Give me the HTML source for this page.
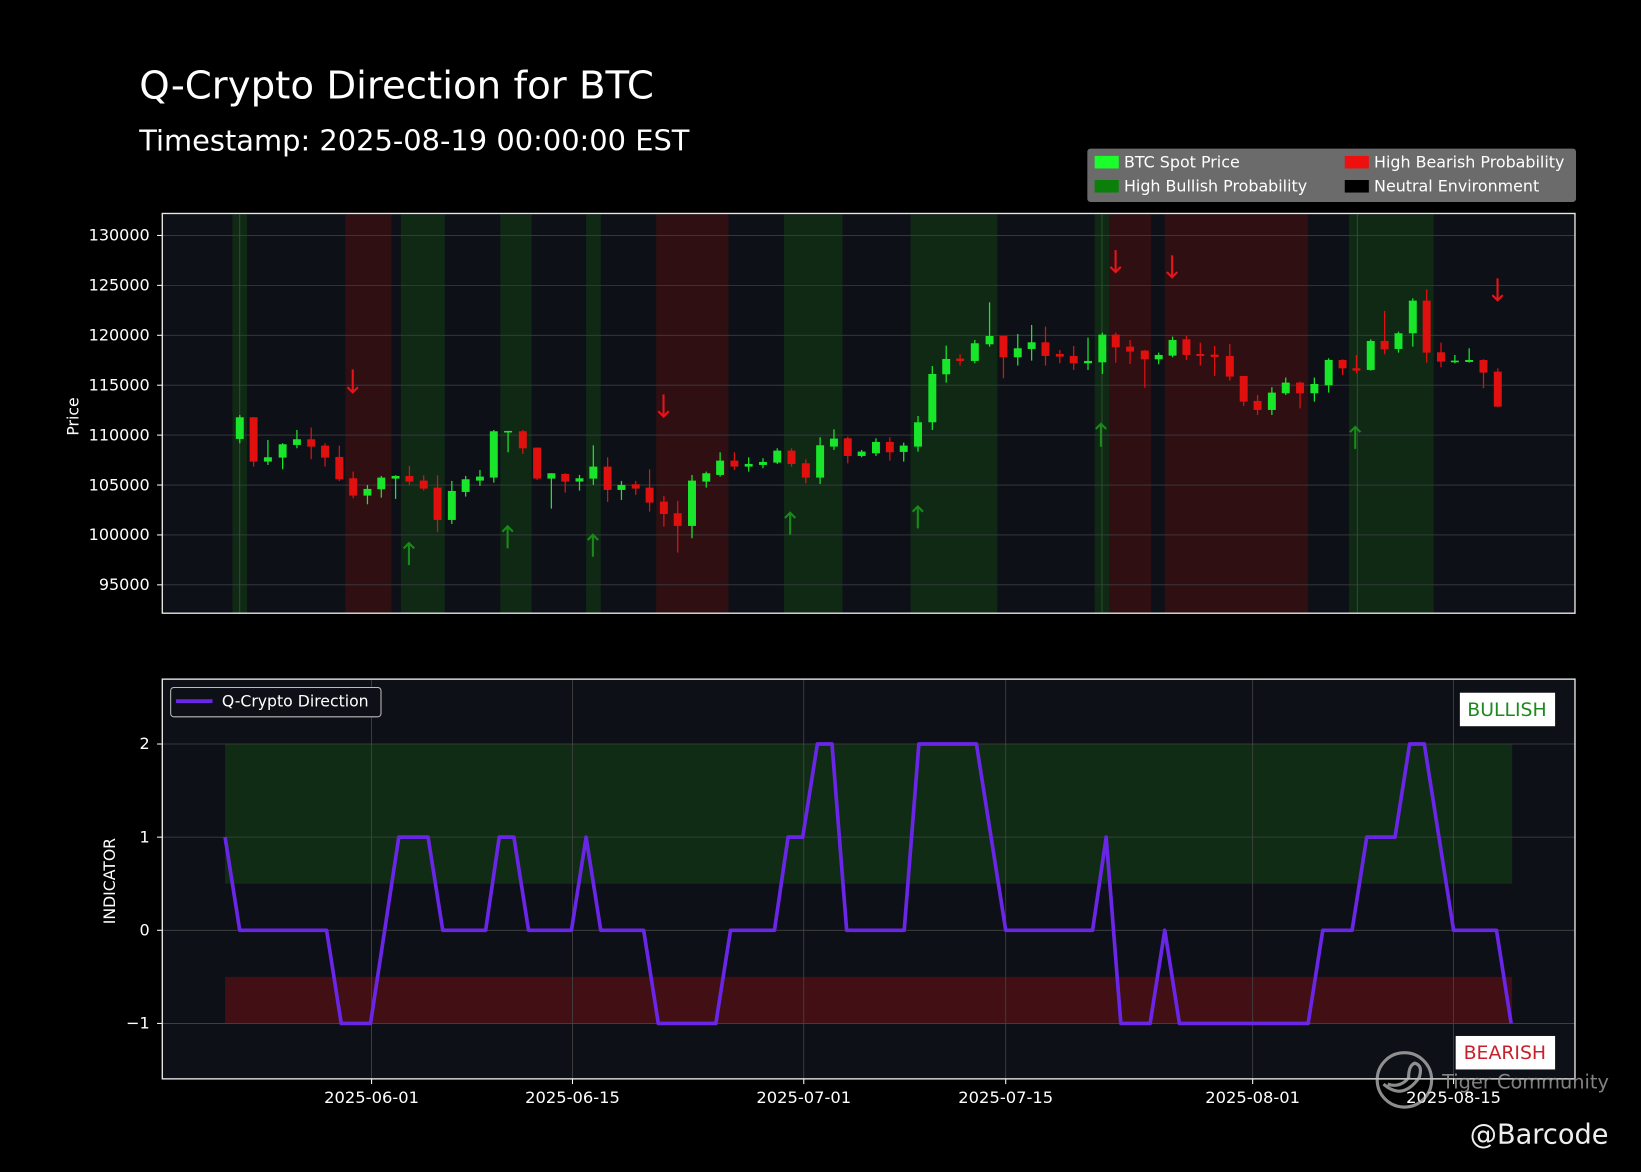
<!DOCTYPE html>
<html><head><meta charset="utf-8">
<style>
html,body{margin:0;padding:0;background:#000;width:1641px;height:1172px;overflow:hidden}
svg{display:block}
text{font-family:"DejaVu Sans","Liberation Sans",sans-serif}
</style></head><body>
<svg id="s" width="1641" height="1172" viewBox="0 0 1568 1120" xmlns="http://www.w3.org/2000/svg">
<rect width="1568" height="1120" fill="#000"/>
<text x="133" y="94" fill="#fff" font-size="37">Q-Crypto Direction for BTC</text>
<text x="133" y="144" fill="#fff" font-size="27.6">Timestamp: 2025-08-19 00:00:00 EST</text>
<!-- legend -->
<rect x="1039" y="142" width="467" height="51" rx="3" fill="#6b6b6b"/>
<rect x="1046" y="149" width="23" height="12" fill="#1aff2a"/>
<text x="1074" y="160" fill="#fff" font-size="15.2">BTC Spot Price</text>
<rect x="1046" y="172" width="23" height="12" fill="#0a800a"/>
<text x="1074" y="183" fill="#fff" font-size="15.2">High Bullish Probability</text>
<rect x="1285" y="149" width="23" height="12" fill="#ee0f0f"/>
<text x="1313" y="160" fill="#fff" font-size="15.2">High Bearish Probability</text>
<rect x="1285" y="172" width="23" height="12" fill="#000"/>
<text x="1313" y="183" fill="#fff" font-size="15.2">Neutral Environment</text>
<!-- top plot -->
<rect x="155" y="204" width="1350" height="382" fill="#0d1016"/>
<g id="top"></g>
<rect x="155" y="204" width="1350" height="382" fill="none" stroke="#e8e8e8" stroke-width="1.3"/>
<text x="75" y="398" fill="#fff" font-size="15" text-anchor="middle" transform="rotate(-90 75 398)">Price</text>
<g id="ytop" fill="#fff" font-size="15.3" text-anchor="end"></g>
<!-- bottom plot -->
<rect x="155" y="649" width="1350" height="382" fill="#0d1016"/>
<g id="bot"></g>
<rect x="155" y="649" width="1350" height="382" fill="none" stroke="#e8e8e8" stroke-width="1.3"/>
<text x="110" y="842" fill="#fff" font-size="15" text-anchor="middle" transform="rotate(-90 110 842)">INDICATOR</text>
<g fill="#fff" font-size="15.3" text-anchor="end">
<text x="143" y="716">2</text><text x="143" y="805">1</text><text x="143" y="894">0</text><text x="143" y="983">−1</text>
</g>
<g fill="#fff" font-size="15.6" text-anchor="middle">
<text x="355" y="1054">2025-06-01</text><text x="547" y="1054">2025-06-15</text><text x="768" y="1054">2025-07-01</text>
<text x="961" y="1054">2025-07-15</text><text x="1197" y="1054">2025-08-01</text><text x="1389" y="1054">2025-08-15</text>
</g>
<rect x="163" y="657" width="201" height="28" rx="3" fill="#0d1016" stroke="#bbb" stroke-width="1"/>
<line x1="168" y1="670" x2="203" y2="670" stroke="#6a26e6" stroke-width="3.5"/>
<text x="212" y="675" fill="#fff" font-size="15">Q-Crypto Direction</text>
<rect x="1395" y="662" width="91" height="32" fill="#fff"/>
<text x="1440" y="684" fill="#1e8a1e" font-size="18" text-anchor="middle">BULLISH</text>
<rect x="1391" y="990" width="95" height="32" fill="#fff"/>
<text x="1438" y="1012" fill="#c8202a" font-size="18" text-anchor="middle">BEARISH</text>
<!-- watermark -->
<g opacity="0.75" stroke="#bbb" fill="none" stroke-width="3">
<circle cx="1342" cy="1032" r="26"/>
<path d="M1322 1036 Q1340 1052 1356 1030 Q1360 1018 1352 1016 Q1346 1018 1346 1030 Q1338 1040 1326 1036"/>
</g>
<text x="1378" y="1040" fill="#999" font-size="18.5" opacity="0.85">Tiger Community</text>
<text x="1537" y="1093" fill="#eee" font-size="26" text-anchor="end">@Barcode</text>
</svg>
<script>
var NS="http://www.w3.org/2000/svg";
function el(p,t,a){var e=document.createElementNS(NS,t);for(var k in a)e.setAttribute(k,a[k]);p.appendChild(e);return e;}
var top_=document.getElementById('top'),bot=document.getElementById('bot'),yt=document.getElementById('ytop');
var G="rgba(20,90,20,0.35)",R="rgba(90,15,15,0.45)";
[[222,236,G],[330,374,R],[383,425,G],[478,508,G],[560,574,G],[627,696,R],[749,805,G],[870,953,G],[1046,1060,G],[1060,1100,R],[1113,1250,R],[1289,1370,G]].forEach(function(r){el(top_,'rect',{x:r[0],y:205,width:r[1]-r[0],height:381,fill:r[2]});});
for(var i=0;i<8;i++){var p=130000-i*5000,y=225+i*47.7;el(top_,'line',{x1:155,x2:1505,y1:y,y2:y,stroke:'#3a3d42','stroke-width':0.8});
el(top_,'line',{x1:150,x2:155,y1:y,y2:y,stroke:'#fff'});var t=el(yt,'text',{x:143,y:y+5});t.textContent=p;}
[229,1053,1297].forEach(function(x){el(top_,'line',{x1:x,x2:x,y1:205,y2:586,stroke:'#2e5a2e','stroke-width':0.8});});
var c1=[[201,652,717,645,730,1],[232,652,785,652,800,0],[264,772,785,720,795,1],[297,733,773,730,808,1],[329,718,735,690,745,1],[361,718,740,683,778,0],[392,737,773,730,800,0],[424,771,838,737,843,0],[455,835,887,815,895,0],[487,867,887,855,913,1],[518,833,868,828,893,1],[550,828,836,826,897,1],[581,828,845,798,855,0],[613,842,866,826,872,0],[644,863,960,826,996,0],[676,873,960,843,972,1],[707,838,876,828,890,1],[739,830,842,810,858,1],[770,694,833,690,848,1],[802,693,697,693,757,1],[835,694,745,690,762,0],[867,743,836,743,840,0],[899,820,836,820,926,1],[930,822,845,820,878,0],[962,835,845,825,872,1],[993,800,836,736,855,1],[1025,800,870,772,906,0],[1056,855,870,843,900,1],[1088,853,866,843,885,0],[1119,863,908,808,935,0],[1151,905,942,888,980,0],[1182,940,978,903,1058,0],[1214,842,978,825,1015,1],[1246,820,845,815,863,1],[1277,782,825,757,830,1],[1309,782,800,757,810,0],[1341,792,800,772,815,1],[1373,786,795,775,805,1],[1405,752,788,745,792,1],[1437,752,792,745,800,0],[1469,790,833,778,850,0],[1501,736,833,712,852,1],[1532,716,740,688,750,1]];
var c2=[[18,715,768,710,790,0],[50,755,768,750,772,1],[83,726,760,715,768,1],[115,726,757,712,782,0],[147,737,756,728,785,1],[180,667,740,648,755,1],[213,522,667,498,690,1],[245,477,523,437,548,1],[277,476,483,463,497,0],[311,430,483,420,490,1],[345,408,433,307,440,1],[377,408,472,408,535,0],[410,445,472,402,497,1],[442,427,447,375,482,1],[474,427,468,380,497,0],[507,462,470,450,490,0],[539,468,490,438,510,0],[572,483,490,413,510,1],[605,404,487,398,522,1],[636,404,442,398,488,0],[669,440,455,420,492,0],[703,452,478,450,563,0],[735,465,478,458,493,1],[767,420,467,410,472,1],[799,418,465,408,480,0],[831,462,468,428,497,0],[864,464,471,438,528,0],[899,468,530,432,542,0],[931,528,605,528,618,0],[963,603,630,585,645,0],[996,578,630,562,645,1],[1028,548,580,533,585,1],[1061,548,580,545,625,0],[1094,552,580,533,605,1],[1127,480,556,475,578,1],[1159,480,505,478,525,0],[1191,505,512,465,520,0],[1224,423,510,418,512,1],[1256,423,448,333,463,0],[1288,400,447,395,458,1],[1321,302,400,295,440,1],[1353,302,458,268,488,0],[1386,457,485,428,502,0],[1418,482,487,465,490,1],[1451,480,486,445,488,1],[1484,480,518,478,565,0],[1517,515,620,505,622,0]];
function Y(z){return 191.1+z*0.3185;}
function draw(x,c){var col=c[5]?'#19e62a':'#e0100f';
el(top_,'line',{x1:x,x2:x,y1:Y(c[3]),y2:Y(c[4]),stroke:col,'stroke-width':1.2});
var a=Y(c[1]),b=Y(c[2]);el(top_,'rect',{x:x-3.8,y:a,width:7.6,height:Math.max(b-a,1.5),fill:col});}
c1.forEach(function(c){draw(143.3+c[0]*0.4266,c);});
c2.forEach(function(c){draw(802.6+c[0]*0.4144,c);});
function arrow(x,y1,y2,up){var col=up?'#1a8a1a':'#e8141a';
el(top_,'line',{x1:x,x2:x,y1:y1,y2:y2,stroke:col,'stroke-width':2});
var h=up?y1:y2,d=up?5:-5;el(top_,'path',{d:'M'+(x-5)+' '+(h+d)+' L'+x+' '+h+' L'+(x+5)+' '+(h+d),stroke:col,'stroke-width':2,fill:'none'});}
[[337,353,375,0],[390.7,519,540,1],[634,377,398,0],[485,503,524,1],[566.5,511,532,1],[755,490,511,1],[877,484,505,1],[1052,405,427,1],[1066,239,260,0],[1120,244,265,0],[1295,408,429,1],[1431,266,287,0]].forEach(function(a){arrow(a[0],a[1],a[2],a[3]);});
el(bot,'rect',{x:215,y:711,width:1230,height:133.5,fill:'rgba(20,80,20,0.45)'});
el(bot,'rect',{x:215,y:933.5,width:1230,height:44.5,fill:'rgba(110,15,20,0.55)'});
[711,800,889,978].forEach(function(y){el(bot,'line',{x1:155,x2:1505,y1:y,y2:y,stroke:'#444','stroke-width':0.8});el(bot,'line',{x1:150,x2:155,y1:y,y2:y,stroke:'#fff'});});
[355,547,768,961,1197,1389].forEach(function(x){el(bot,'line',{x1:x,x2:x,y1:649,y2:1031,stroke:'#444','stroke-width':0.8});el(bot,'line',{x1:x,x2:x,y1:1031,y2:1036,stroke:'#fff'});});
var pts="215,800 229,889 312,889 326,978 354,978 381,800 409,800 423,889 464,889 477,800 491,800 505,889 546,889 560,800 574,889 615,889 629,978 684,978 698,889 740,889 753,800 767,800 781,711 795,711 809,889 864,889 878,711 933,711 961,889 1044,889 1057,800 1071,978 1099,978 1113,889 1127,978 1250,978 1264,889 1292,889 1306,800 1333,800 1347,711 1361,711 1389,889 1430,889 1444,978";
el(bot,'polyline',{points:pts,fill:'none',stroke:'#6a26e6','stroke-width':3.5,'stroke-linejoin':'round'});
</script>
</body></html>
